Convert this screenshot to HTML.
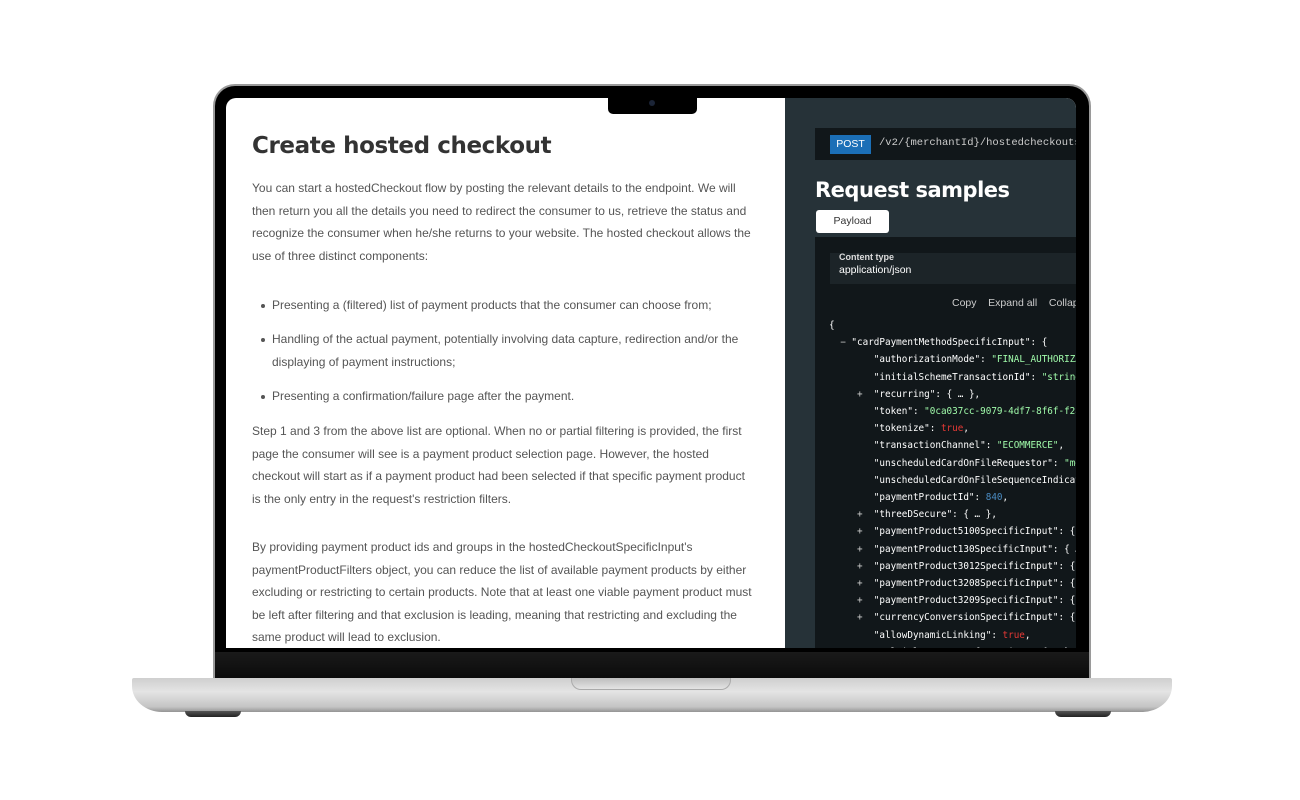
<!DOCTYPE html>
<html><head><meta charset="utf-8"><style>
*{margin:0;padding:0;box-sizing:border-box}
body{width:1300px;height:800px;background:#fff;position:relative;overflow:hidden;font-family:"Liberation Sans",sans-serif}
.abs{position:absolute}
#lid{left:213px;top:84px;width:878px;height:600px;background:#000;border-radius:22px 22px 0 0;border:2px solid #9a9a9a;border-bottom:none}
#screen{left:226px;top:98px;width:850px;height:550px;background:#fff;border-radius:10px 10px 0 0;overflow:hidden}
#chin{left:215px;top:652px;width:874px;height:28px;background:linear-gradient(#1a1a1a,#0a0a0a)}
#base{left:132px;top:678px;width:1040px;height:34px;background:linear-gradient(#cfcfcf,#e4e4e4 40%,#c4c4c4 85%,#949494);border-radius:2px 2px 30px 30px/2px 2px 26px 26px}
#groove{left:571px;top:678px;width:160px;height:12px;background:linear-gradient(#bdbdbd,#e4e4e4);border-radius:0 0 10px 10px;border:1px solid #aaa;border-top:none}
.foot{top:711px;width:56px;height:6px;background:linear-gradient(#555,#222);border-radius:0 0 6px 6px}
#notch{left:608px;top:98px;width:89px;height:16px;background:#000;border-radius:0 0 5px 5px}
#cam{left:649px;top:100px;width:6px;height:6px;border-radius:50%;background:#1b2436}
h1{position:absolute;left:26px;top:35px;font-family:"DejaVu Sans",sans-serif;font-weight:bold;font-size:23px;color:#333;letter-spacing:-0.4px}
.p{position:absolute;left:26px;width:503px;color:#555;font-size:12px;line-height:22.5px}
.li{position:absolute;left:46px;width:483px;color:#555;font-size:12px;line-height:22.5px}
.li:before{content:"";position:absolute;left:-11px;top:10px;width:4px;height:4px;border-radius:50%;background:#555}
#dark{left:559px;top:0;width:291px;height:550px;background:#263238}
#post{left:30px;top:30px;width:270px;height:32px;background:#11171a}
#postb{left:15px;top:7px;width:41px;height:19px;background:#1b6fb7;color:#fff;font-size:10.5px;line-height:19px;text-align:center}
#path{left:64px;top:9px;color:#ccc;font-family:"Liberation Mono",monospace;font-size:10.5px}
#rs{left:30px;top:80px;color:#fff;font-family:"DejaVu Sans",sans-serif;font-weight:bold;font-size:21px;letter-spacing:-0.5px}
#pl{left:31px;top:112px;width:73px;height:23px;background:#fff;border-radius:3px;font-size:10.5px;line-height:23px;text-align:center;color:#333}
#code{left:30px;top:139px;width:270px;height:420px;background:#11171a}
#ct{left:15px;top:16px;width:260px;height:31px;background:#1c2428;color:#fff}
#ctl{left:9px;top:-1px;font-size:9px;font-weight:bold;color:#ddd}
#ctv{left:9px;top:11px;font-size:10.5px;color:#fff}
#tools{left:137px;top:60px;color:#ccc;font-size:10.5px;white-space:nowrap}
pre{position:absolute;left:14px;top:80px;font-family:"DejaVu Sans Mono",monospace;font-size:9.3px;line-height:17.2px;color:#fff;white-space:pre}
.s{color:#a0fbaa}.b{color:#e53935}.n{color:#4a8bc2}.t{color:#ccc}
</style></head><body>
<div id="lid" class="abs"></div>
<div id="screen" class="abs">
<h1>Create hosted checkout</h1>
<div class="p" style="top:79px">You can start a hostedCheckout flow by posting the relevant details to the endpoint. We will then return you all the details you need to redirect the consumer to us, retrieve the status and recognize the consumer when he/she returns to your website. The hosted checkout allows the use of three distinct components:</div>
<div class="li" style="top:196px">Presenting a (filtered) list of payment products that the consumer can choose from;</div>
<div class="li" style="top:230px">Handling of the actual payment, potentially involving data capture, redirection and/or the displaying of payment instructions;</div>
<div class="li" style="top:287px">Presenting a confirmation/failure page after the payment.</div>
<div class="p" style="top:322px">Step 1 and 3 from the above list are optional. When no or partial filtering is provided, the first page the consumer will see is a payment product selection page. However, the hosted checkout will start as if a payment product had been selected if that specific payment product is the only entry in the request's restriction filters.</div>
<div class="p" style="top:438px">By providing payment product ids and groups in the hostedCheckoutSpecificInput's paymentProductFilters object, you can reduce the list of available payment products by either excluding or restricting to certain products. Note that at least one viable payment product must be left after filtering and that exclusion is leading, meaning that restricting and excluding the same product will lead to exclusion.</div>
<div id="dark" class="abs">
<div id="post" class="abs"><div id="postb" class="abs">POST</div><div id="path" class="abs">/v2/{merchantId}/hostedcheckouts</div></div>
<div id="rs" class="abs">Request samples</div>
<div id="pl" class="abs">Payload</div>
<div id="code" class="abs">
<div id="ct" class="abs"><div id="ctl" class="abs">Content type</div><div id="ctv" class="abs">application/json</div></div>
<div id="tools" class="abs">Copy &nbsp;&nbsp; Expand all &nbsp;&nbsp; Collapse all</div>
<pre>{
  <span class="t">−</span> "cardPaymentMethodSpecificInput": {
        "authorizationMode": <span class="s">"FINAL_AUTHORIZATION"</span>,
        "initialSchemeTransactionId": <span class="s">"string"</span>,
     <span class="t">+</span>  "recurring": { … },
        "token": <span class="s">"0ca037cc-9079-4df7-8f6f-f2a3443ee521"</span>,
        "tokenize": <span class="b">true</span>,
        "transactionChannel": <span class="s">"ECOMMERCE"</span>,
        "unscheduledCardOnFileRequestor": <span class="s">"merchantInitiated"</span>,
        "unscheduledCardOnFileSequenceIndicator": <span class="s">"first"</span>,
        "paymentProductId": <span class="n">840</span>,
     <span class="t">+</span>  "threeDSecure": { … },
     <span class="t">+</span>  "paymentProduct5100SpecificInput": { … },
     <span class="t">+</span>  "paymentProduct130SpecificInput": { … },
     <span class="t">+</span>  "paymentProduct3012SpecificInput": { … },
     <span class="t">+</span>  "paymentProduct3208SpecificInput": { … },
     <span class="t">+</span>  "paymentProduct3209SpecificInput": { … },
     <span class="t">+</span>  "currencyConversionSpecificInput": { … },
        "allowDynamicLinking": <span class="b">true</span>,
     <span class="t">+</span>  "multiplePaymentInformation": { … },</pre>
</div>
</div>
</div>
<div id="notch" class="abs"></div>
<div id="cam" class="abs"></div>
<div id="chin" class="abs"></div>
<div id="base" class="abs"></div>
<div id="groove" class="abs"></div>
<div class="abs foot" style="left:185px"></div>
<div class="abs foot" style="left:1055px"></div>
</body></html>
